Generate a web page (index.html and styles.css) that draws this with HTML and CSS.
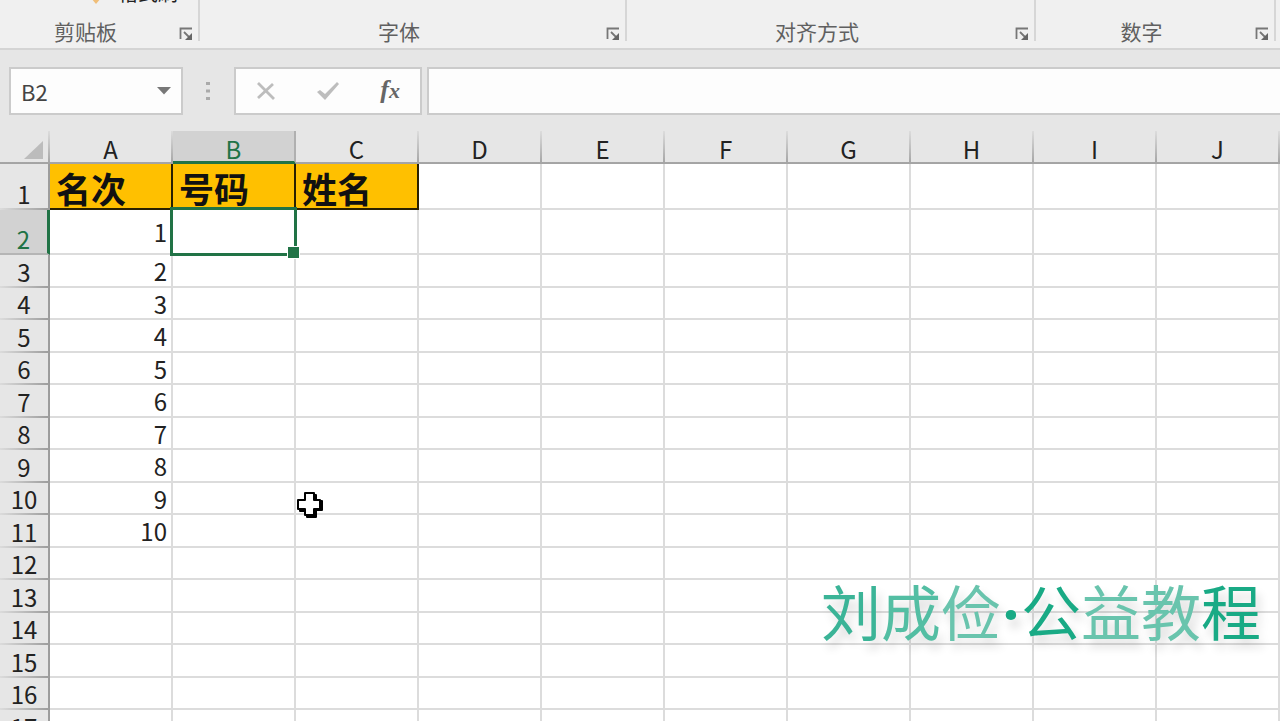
FILE: index.html
```html
<!DOCTYPE html>
<html lang="zh-CN">
<head>
<meta charset="utf-8">
<title>工作表</title>
<link rel="stylesheet" href="styles.css">
</head>
<body>
<svg class="defs" aria-hidden="true">
  <symbol id="launch" viewBox="0 0 14 14"><path d="M1.500 12V1.500H13M5 5l5 5" fill="none" stroke="#777" stroke-width="1.800"/><path d="M13 6v7H6z" fill="#666"/></symbol>
</svg>
<div class="app">
  <header class="ribbon">
    <section class="group">
      <button class="painter"><svg width="12" height="12" viewBox="0 0 12 12"><path d="M1 5l5 6 5-6z" fill="#f0be78"/></svg>格式刷</button>
      <span class="label">剪贴板</span>
      <button class="launcher" aria-label="剪贴板设置"><svg><use href="#launch"/></svg></button>
    </section>
    <section class="group">
      <span class="label">字体</span>
      <button class="launcher" aria-label="字体设置"><svg><use href="#launch"/></svg></button>
    </section>
    <section class="group">
      <span class="label">对齐方式</span>
      <button class="launcher" aria-label="对齐设置"><svg><use href="#launch"/></svg></button>
    </section>
    <section class="group">
      <span class="label">数字</span>
      <button class="launcher" aria-label="数字设置"><svg><use href="#launch"/></svg></button>
    </section>
  </header>
  <div class="formula-bar">
    <div class="box name-box">
      <input class="name" aria-label="名称框" value="B2">
      <button class="drop" aria-label="展开名称"><svg width="14" height="8" viewBox="0 0 14 8"><path d="M0 0h14L7 7.500z" fill="#777"/></svg></button>
    </div>
    <svg class="grip" width="4" height="20" viewBox="0 0 4 20"><path d="M0 1h4v3H0zM0 8.500h4v3H0zM0 16h4v3H0z" fill="#aaa"/></svg>
    <div class="box actions">
      <button aria-label="取消"><svg width="20" height="18" viewBox="0 0 20 18"><path d="M2 1l16 16M17 2L2 16" fill="none" stroke="#bdbdbd" stroke-width="2.800"/></svg></button>
      <button aria-label="输入"><svg width="24" height="20" viewBox="0 0 24 20"><path d="M1 11l3-2 5 4L21 1l2 2L9 19z" fill="#bdbdbd"/></svg></button>
      <button class="fx" aria-label="插入函数">f<span class="fx-x">x</span></button>
    </div>
    <input class="box formula" aria-label="编辑栏">
  </div>
  <main class="sheet">
    <table>
      <thead>
        <tr><th class="corner"><svg width="19" height="18" viewBox="0 0 19 18"><path d="M19 0v18H0z" fill="#bcbcbc"/></svg></th><th>A</th><th class="active">B</th><th>C</th><th>D</th><th>E</th><th>F</th><th>G</th><th>H</th><th>I</th><th>J</th></tr>
      </thead>
      <tbody>
        <tr class="tall first"><th>1</th><td class="title">名次</td><td class="title">号码</td><td class="title">姓名</td><td></td><td></td><td></td><td></td><td></td><td></td><td></td></tr>
        <tr class="tall second"><th class="active">2</th><td>1</td><td class="selected"><span class="selection"></span></td><td></td><td></td><td></td><td></td><td></td><td></td><td></td><td></td></tr>
        <tr><th>3</th><td>2</td><td></td><td></td><td></td><td></td><td></td><td></td><td></td><td></td><td></td></tr>
        <tr><th>4</th><td>3</td><td></td><td></td><td></td><td></td><td></td><td></td><td></td><td></td><td></td></tr>
        <tr><th>5</th><td>4</td><td></td><td></td><td></td><td></td><td></td><td></td><td></td><td></td><td></td></tr>
        <tr><th>6</th><td>5</td><td></td><td></td><td></td><td></td><td></td><td></td><td></td><td></td><td></td></tr>
        <tr><th>7</th><td>6</td><td></td><td></td><td></td><td></td><td></td><td></td><td></td><td></td><td></td></tr>
        <tr><th>8</th><td>7</td><td></td><td></td><td></td><td></td><td></td><td></td><td></td><td></td><td></td></tr>
        <tr><th>9</th><td>8</td><td></td><td></td><td></td><td></td><td></td><td></td><td></td><td></td><td></td></tr>
        <tr><th>10</th><td>9</td><td></td><td></td><td></td><td></td><td></td><td></td><td></td><td></td><td></td></tr>
        <tr><th>11</th><td>10</td><td></td><td></td><td></td><td></td><td></td><td></td><td></td><td></td><td></td></tr>
        <tr><th>12</th><td></td><td></td><td></td><td></td><td></td><td></td><td></td><td></td><td></td><td></td></tr>
        <tr><th>13</th><td></td><td></td><td></td><td></td><td></td><td></td><td></td><td></td><td></td><td></td></tr>
        <tr><th>14</th><td></td><td></td><td></td><td></td><td></td><td></td><td></td><td></td><td></td><td></td></tr>
        <tr><th>15</th><td></td><td></td><td></td><td></td><td></td><td></td><td></td><td></td><td></td><td></td></tr>
        <tr><th>16</th><td></td><td></td><td></td><td></td><td></td><td></td><td></td><td></td><td></td><td></td></tr>
        <tr><th>17</th><td></td><td></td><td></td><td></td><td></td><td></td><td></td><td></td><td></td><td></td></tr>
      </tbody>
    </table>
  </main>
  <div class="watermark"><span class="mid">刘</span><span class="soft">成</span><span class="pale">俭</span><span class="deep"><span class="dot">·</span>公</span><span class="pale">益教</span><span class="deep">程</span></div>
  <svg class="cursor" width="28" height="28" viewBox="0 0 28 28"><path d="M11 4h9v6h6v9h-6v7h-9v-6H4v-9h7z" fill="#000" stroke="#000" stroke-width="2" stroke-linejoin="round"/><path d="M9 2h9v7h6v9h-6v6H9v-6H2V9h7z" fill="#fff" stroke="#000" stroke-width="2" stroke-linejoin="round"/></svg>
</div>
</body>
</html>
```

FILE: styles.css
```css
* { box-sizing: border-box; }

body {
  margin: 0;
  font-family: "Noto Sans CJK SC", sans-serif;
  color: #222;
  background: #e6e6e6;
}

button {
  padding: 0;
  border: 0;
  background: none;
  font: inherit;
  color: inherit;
}

.defs { display: none; }

.app {
  position: relative;
  height: 100vh;
  overflow: hidden;
}

/* Ribbon */
.ribbon {
  display: grid;
  grid-template-columns: 200fr 427fr 409fr 240fr 4fr;
  height: 50px;
  background: #f0f0f0;
  border-bottom: 2px solid #d4d4d4;
}

.group {
  position: relative;
  display: flex;
  align-items: flex-end;
  padding: 0 7px 4px 0;
  overflow: hidden;
}

.group::after {
  content: "";
  position: absolute;
  top: 0;
  right: 0;
  width: 2px;
  height: 41px;
  background: #d6d6d6;
}

.label {
  flex: 1;
  padding: 0 8px 1px 0;
  font-size: 21px;
  line-height: 24px;
  text-align: center;
  color: #606060;
}

.launcher {
  width: 14px;
  height: 20px;
}

.launcher svg {
  display: block;
  width: 14px;
  height: 14px;
}

.painter {
  position: absolute;
  left: 90px;
  bottom: 43px;
  display: flex;
  align-items: flex-end;
  gap: 16px;
  font-size: 20px;
  line-height: 24px;
}

/* Formula bar */
.formula-bar {
  display: flex;
  align-items: center;
  height: 81px;
  padding-left: 9px;
}

.box {
  height: 48px;
  background: #fdfdfd;
  border: 2px solid #cbcbcb;
}

.name-box {
  display: flex;
  align-items: center;
  width: 174px;
  padding: 0 10px;
}

.name {
  flex: 1;
  min-width: 0;
  padding: 0;
  border: 0;
  background: none;
  font: 22px/26px "Noto Sans CJK SC", sans-serif;
  color: #444;
}

.drop svg { display: block; }

.grip { margin: 0 24px 0 23px; }

.actions {
  display: flex;
  align-items: center;
  justify-content: space-between;
  width: 188px;
  padding: 0 20px;
}

.actions svg { display: block; }

.fx {
  font: italic bold 26px/30px "Liberation Serif", serif;
  color: #666;
}

.fx-x { font-size: 22px; }

.formula {
  flex: 1;
  min-width: 0;
  margin-left: 5px;
  border-right: 0;
  border-radius: 0;
}

/* Grid */
table {
  width: 100%;
  table-layout: fixed;
  border-spacing: 0;
  font-size: 24px;
  line-height: 28px;
}

th, td {
  height: 32px;
  padding: 0;
}

tbody tr:nth-child(odd) > * { height: 33px; }
tbody tr.first > * { height: 46px; }
tbody tr.second > * { height: 45px; }

th {
  font-weight: 400;
  text-align: center;
  vertical-align: bottom;
  background: #e6e6e6;
}

thead th {
  height: 33px;
  line-height: 26px;
  border-right: 2px solid;
  border-bottom: 2px solid #a3a3a3;
  border-image: linear-gradient(#e0e0e0, #a3a3a3) 2;
}

thead .corner {
  width: 50px;
  padding: 0 5px 3px 0;
  text-align: right;
}

.corner svg { display: inline-block; vertical-align: bottom; }

tbody th {
  border-right: 2px solid #9b9b9b;
  border-bottom: 2px solid;
  border-image: linear-gradient(to right, #dedede, #9b9b9b) 2;
}

thead .active {
  line-height: 24px;
  color: #217346;
  background: #d2d2d2;
  border-bottom: 3px solid #217346;
  border-right: 2px solid #b0b0b0;
  border-image: none;
}

tbody .active {
  color: #217346;
  background: #d2d2d2;
  border-right: 3px solid #217346;
  border-bottom: 2px solid #b5b5b5;
  border-image: none;
}

td {
  padding: 1px 4px 0 0;
  text-align: right;
  vertical-align: middle;
  background: #fff;
  border-right: 2px solid #dcdcdc;
  border-bottom: 2px solid #dcdcdc;
}

.title {
  padding: 4px 0 0 6px;
  font-size: 35px;
  font-weight: 700;
  line-height: 36px;
  text-align: left;
  color: #111;
  background: #ffc000;
  border-right-color: #2a2000;
  border-bottom-color: #2a2000;
}

.selected { position: relative; }

.selection {
  position: absolute;
  inset: -3px;
  border: 3px solid #217346;
}

.selection::after {
  content: "";
  position: absolute;
  right: -6px;
  bottom: -6px;
  width: 11px;
  height: 11px;
  background: #217346;
  border: 1px solid #fff;
}

/* Overlays */
.watermark {
  position: absolute;
  right: 19px;
  bottom: 68px;
  font-size: 60px;
  font-weight: 400;
  line-height: 80px;
  white-space: nowrap;
  text-shadow: 4px 8px 10px rgba(0, 0, 0, 0.15);
}

.mid { color: #3bb497; }
.soft { color: #53bea3; }
.pale { color: #69c4ad; }
.deep { color: #19aa85; }

.dot {
  display: inline-block;
  width: 20px;
  font-family: "Noto Sans", sans-serif;
  font-weight: 700;
  text-align: center;
}

.cursor {
  position: absolute;
  left: 296px;
  top: 491px;
}
```
